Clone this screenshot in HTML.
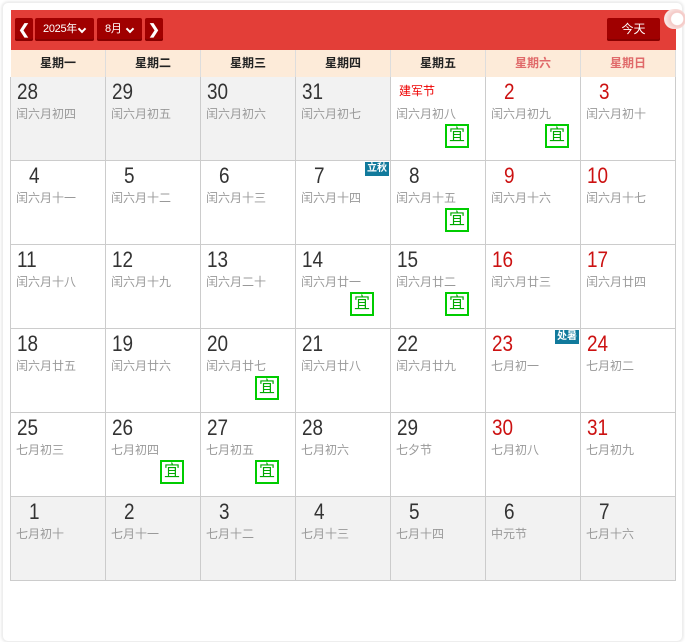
<!DOCTYPE html>
<html><head><meta charset="utf-8"><style>
*{margin:0;padding:0;box-sizing:border-box}
body{width:685px;height:623px;background:#fff;font-family:"Liberation Sans","Noto Sans CJK SC",sans-serif;position:relative;overflow:hidden}
.frame{position:absolute;left:2px;top:2px;width:681px;height:640px;border:1px solid #eee;border-radius:6px;box-shadow:0 0 3px #ddd}
.top{position:absolute;left:11px;top:10px;width:665px;height:40px;background:#e33e38}
.btn{position:absolute;top:8px;height:23px;background:#a00000;color:#fff;font-size:12px;line-height:23px;border-radius:2px;box-shadow:inset 0 -2px 0 #800}
.arr{font-weight:bold;text-align:center;font-size:14px}
.sel{padding-left:8px;font-size:11px;letter-spacing:-0.3px}
.sel:after{content:"";position:absolute;right:9px;top:8px;width:4px;height:4px;border-right:2px solid #fff;border-bottom:2px solid #fff;transform:rotate(45deg)}
.knob{position:absolute;left:664px;top:9px;width:22px;height:20px;border-radius:10px;background:radial-gradient(circle at 60% 50%,#fff 35%,#f4c8c5 40%,#f9e6e4 70%);}
.wk{position:absolute;left:11px;top:50px;width:665px;height:27px;display:grid;grid-template-columns:repeat(7,95px);background:#fdebd9}
.wk div{text-align:center;font-size:12px;font-weight:bold;line-height:27px;color:#222;border-right:1px solid #ddd;border-bottom:1px solid #ccc}
.wk .r{color:#e06a6a}
.grid{position:absolute;left:10px;top:77px;width:666px;display:grid;grid-template-columns:1px repeat(7,95px);grid-auto-rows:84px}
.e{background:#ccc}
.c{position:relative;border-right:1px solid #ccc;border-bottom:1px solid #ccc;background:#fff}
.g{background:#f2f2f2}
.n{position:absolute;left:6px;top:2px;font-size:22px;font-weight:normal;color:#333;line-height:26px;transform:scaleX(.86);transform-origin:left top}
.n.s{left:18px}
.c.w .n{color:#cc1111}
.l{position:absolute;left:5px;top:29px;font-size:12px;color:#999;font-style:normal;line-height:16px}
.f{position:absolute;left:8px;top:6px;font-size:12px;color:#e00;line-height:16px}
.y{position:absolute;left:54px;top:47px;width:24px;height:24px;border:2px solid #0c0;color:#0a0;font-size:16px;text-align:center;line-height:20px}
.t{position:absolute;right:1px;top:1px;background:#117a9c;color:#fff;font-size:10px;font-weight:bold;line-height:14px;padding:0 2px}
</style></head><body>
<div class="frame"></div>
<div class="top">
<div class="btn arr" style="left:4px;width:18px">&#10094;</div>
<div class="btn sel" style="left:24px;width:59px">2025年</div>
<div class="btn sel" style="left:86px;width:45px">8月</div>
<div class="btn arr" style="left:134px;width:18px">&#10095;</div>
<div class="btn" style="left:596px;width:53px;text-align:center">今天</div>
</div>
<div class="knob"></div>
<div class="wk"><div>星期一</div><div>星期二</div><div>星期三</div><div>星期四</div><div>星期五</div><div class="r">星期六</div><div class="r">星期日</div></div>
<div class="grid">
<div class="e"></div>
<div class="c g"><b class="n">28</b><i class="l">闰六月初四</i></div>
<div class="c g"><b class="n">29</b><i class="l">闰六月初五</i></div>
<div class="c g"><b class="n">30</b><i class="l">闰六月初六</i></div>
<div class="c g"><b class="n">31</b><i class="l">闰六月初七</i></div>
<div class="c"><span class="f">建军节</span><i class="l">闰六月初八</i><span class="y">宜</span></div>
<div class="c w"><b class="n s">2</b><i class="l">闰六月初九</i><span class="y" style="left:59px">宜</span></div>
<div class="c w"><b class="n s">3</b><i class="l">闰六月初十</i></div>
<div class="e"></div>
<div class="c"><b class="n s">4</b><i class="l">闰六月十一</i></div>
<div class="c"><b class="n s">5</b><i class="l">闰六月十二</i></div>
<div class="c"><b class="n s">6</b><i class="l">闰六月十三</i></div>
<div class="c"><b class="n s">7</b><i class="l">闰六月十四</i><span class="t">立秋</span></div>
<div class="c"><b class="n s">8</b><i class="l">闰六月十五</i><span class="y">宜</span></div>
<div class="c w"><b class="n s">9</b><i class="l">闰六月十六</i></div>
<div class="c w"><b class="n">10</b><i class="l">闰六月十七</i></div>
<div class="e"></div>
<div class="c"><b class="n">11</b><i class="l">闰六月十八</i></div>
<div class="c"><b class="n">12</b><i class="l">闰六月十九</i></div>
<div class="c"><b class="n">13</b><i class="l">闰六月二十</i></div>
<div class="c"><b class="n">14</b><i class="l">闰六月廿一</i><span class="y">宜</span></div>
<div class="c"><b class="n">15</b><i class="l">闰六月廿二</i><span class="y">宜</span></div>
<div class="c w"><b class="n">16</b><i class="l">闰六月廿三</i></div>
<div class="c w"><b class="n">17</b><i class="l">闰六月廿四</i></div>
<div class="e"></div>
<div class="c"><b class="n">18</b><i class="l">闰六月廿五</i></div>
<div class="c"><b class="n">19</b><i class="l">闰六月廿六</i></div>
<div class="c"><b class="n">20</b><i class="l">闰六月廿七</i><span class="y">宜</span></div>
<div class="c"><b class="n">21</b><i class="l">闰六月廿八</i></div>
<div class="c"><b class="n">22</b><i class="l">闰六月廿九</i></div>
<div class="c w"><b class="n">23</b><i class="l">七月初一</i><span class="t">处暑</span></div>
<div class="c w"><b class="n">24</b><i class="l">七月初二</i></div>
<div class="e"></div>
<div class="c"><b class="n">25</b><i class="l">七月初三</i></div>
<div class="c"><b class="n">26</b><i class="l">七月初四</i><span class="y">宜</span></div>
<div class="c"><b class="n">27</b><i class="l">七月初五</i><span class="y">宜</span></div>
<div class="c"><b class="n">28</b><i class="l">七月初六</i></div>
<div class="c"><b class="n">29</b><i class="l">七夕节</i></div>
<div class="c w"><b class="n">30</b><i class="l">七月初八</i></div>
<div class="c w"><b class="n">31</b><i class="l">七月初九</i></div>
<div class="e"></div>
<div class="c g"><b class="n s">1</b><i class="l">七月初十</i></div>
<div class="c g"><b class="n s">2</b><i class="l">七月十一</i></div>
<div class="c g"><b class="n s">3</b><i class="l">七月十二</i></div>
<div class="c g"><b class="n s">4</b><i class="l">七月十三</i></div>
<div class="c g"><b class="n s">5</b><i class="l">七月十四</i></div>
<div class="c g"><b class="n s">6</b><i class="l">中元节</i></div>
<div class="c g"><b class="n s">7</b><i class="l">七月十六</i></div>
</div>
</body></html>
